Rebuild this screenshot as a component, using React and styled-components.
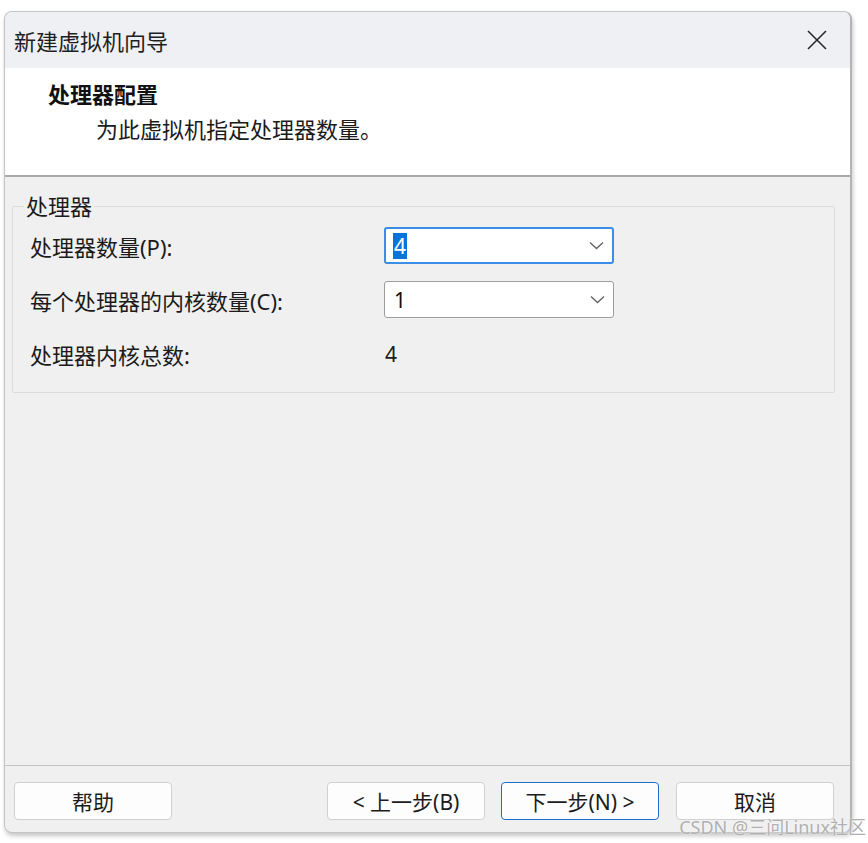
import React from "react";
import styled, { createGlobalStyle } from "styled-components";

const GlobalStyle = createGlobalStyle`
  html, body {
    margin: 0;
    padding: 0;
    background: #ffffff;
  }
  body {
    font-family: "Noto Sans", "Noto Sans CJK SC", sans-serif;
    color: #1b1b1b;
  }
`;

const Page = styled.div`
  position: relative;
  width: 868px;
  height: 843px;
  padding: 11px 0 0 4px;
  box-sizing: border-box;
`;

const Window = styled.div`
  width: 848px;
  height: 822px;
  box-sizing: border-box;
  display: flex;
  flex-direction: column;
  background: #f0f0f0;
  border: 1px solid #c4c4c4;
  border-right: 2px solid #b4b4b4;
  border-radius: 8px;
  overflow: hidden;
  box-shadow: 1px 3px 4px rgba(0, 0, 0, 0.22);
`;

const TitleBar = styled.div`
  height: 56px;
  flex: none;
  display: flex;
  align-items: center;
  justify-content: space-between;
  padding: 0 18px 0 9px;
  background: #eff0f4;
  font-size: 22px;
  color: #1f1f1f;
`;

const CloseButton = styled.button`
  width: 30px;
  height: 30px;
  border: none;
  background: transparent;
  padding: 0;
  display: flex;
  align-items: center;
  justify-content: center;
  color: #2a2a2a;
`;

const Header = styled.div`
  height: 109px;
  flex: none;
  box-sizing: border-box;
  background: #ffffff;
  border-bottom: 2px solid #a9a9a9;
  padding: 11px 0 0 43px;
`;

const HeaderTitle = styled.div`
  font-size: 22px;
  line-height: 30px;
  font-weight: 700;
  color: #111;
`;

const HeaderText = styled.div`
  margin-top: 5px;
  padding-left: 48px;
  font-size: 22px;
  line-height: 30px;
`;

const Body = styled.div`
  flex: 1;
  padding: 14px 15px 0 7px;
`;

const Group = styled.fieldset`
  margin: 0;
  padding: 6px 0 20px 17px;
  border: 1px solid #dcdcdc;
  border-radius: 2px;
  display: flex;
  flex-direction: column;
  gap: 17px;
`;

const Legend = styled.legend`
  margin-left: -6px;
  padding: 0 2px;
  font-size: 22px;
  line-height: 30px;
`;

const Row = styled.div`
  display: grid;
  grid-template-columns: 354px 230px;
  align-items: center;
  height: 37px;
  font-size: 22px;
`;

const Combo = styled.div`
  height: 37px;
  box-sizing: border-box;
  display: flex;
  align-items: center;
  justify-content: space-between;
  padding: 0 8px 0 8px;
  background: #ffffff;
  border: ${(p) => (p.focused ? "2px solid #3b8de6" : "1px solid #9d9d9d")};
  padding-left: ${(p) => (p.focused ? "7px" : "8px")};
  border-radius: 3px;
`;

const Value = styled.span`
  font-size: 21px;
  line-height: 26px;
  padding: 0 1px;
  color: ${(p) => (p.selected ? "#ffffff" : "#111")};
  background: ${(p) => (p.selected ? "#0a74d6" : "transparent")};
`;

const Total = styled.span`
  font-size: 21px;
  padding-left: 1px;
`;

const Footer = styled.div`
  flex: none;
  display: flex;
  align-items: center;
  border-top: 1px solid #c4c4c4;
  padding: 16px 16px 12px 9px;
`;

const Spacer = styled.div`
  flex: 1;
`;

const Button = styled.button`
  width: 158px;
  height: 38px;
  box-sizing: border-box;
  margin-left: ${(p) => p.gap || 0}px;
  background: #fdfdfd;
  border: ${(p) => (p.primary ? "1.5px solid #1a6fc9" : "1px solid #d0d0d0")};
  border-radius: 4px;
  font-family: "Noto Sans", "Noto Sans CJK SC", sans-serif;
  font-size: 21px;
  color: #1b1b1b;
  padding: 0;
`;

const Watermark = styled.div`
  position: absolute;
  right: 2px;
  bottom: 4px;
  font-size: 18px;
  color: #b0b0b0;
  text-shadow: 0 0 2px #fff;
`;

const Chevron = () => (
  <svg width="15" height="9" viewBox="0 0 15 9" fill="none">
    <path d="M1 1.5 L7.5 7.5 L14 1.5" stroke="#606060" strokeWidth="1.3" />
  </svg>
);

const App = () => {
  return (
    <Page>
      <GlobalStyle />
      <Window>
        <TitleBar>
          <span>新建虚拟机向导</span>
          <CloseButton>
            <svg width="20" height="20" viewBox="0 0 20 20">
              <path d="M1 1 L19 19 M19 1 L1 19" stroke="#2a2a2a" strokeWidth="1.6" />
            </svg>
          </CloseButton>
        </TitleBar>
        <Header>
          <HeaderTitle>处理器配置</HeaderTitle>
          <HeaderText>为此虚拟机指定处理器数量。</HeaderText>
        </Header>
        <Body>
          <Group>
            <Legend>处理器</Legend>
            <Row>
              <span>处理器数量(P):</span>
              <Combo focused>
                <Value selected>4</Value>
                <Chevron />
              </Combo>
            </Row>
            <Row>
              <span>每个处理器的内核数量(C):</span>
              <Combo>
                <Value>1</Value>
                <Chevron />
              </Combo>
            </Row>
            <Row>
              <span>处理器内核总数:</span>
              <Total>4</Total>
            </Row>
          </Group>
        </Body>
        <Footer>
          <Button>帮助</Button>
          <Spacer />
          <Button>&lt; 上一步(B)</Button>
          <Button gap={16} primary>
            下一步(N) &gt;
          </Button>
          <Button gap={17}>取消</Button>
        </Footer>
      </Window>
      <Watermark>CSDN @三问Linux社区</Watermark>
    </Page>
  );
};

export default App;
